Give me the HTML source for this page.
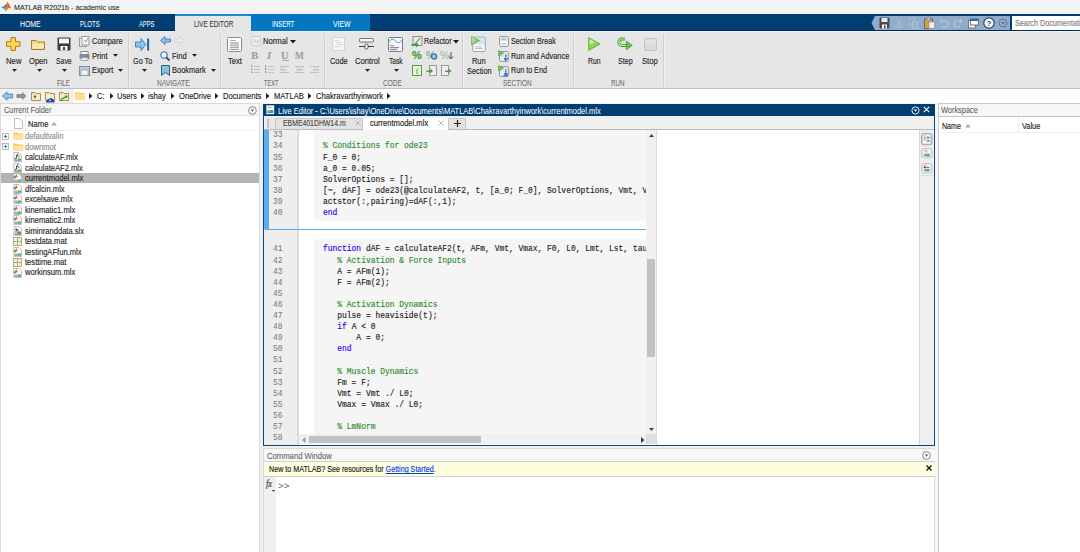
<!DOCTYPE html>
<html><head><meta charset="utf-8"><style>
html,body{margin:0;padding:0;}
body{width:1080px;height:552px;overflow:hidden;position:relative;background:#f0f0f0;font-family:"Liberation Sans",sans-serif;}
.a{position:absolute;}
.t{white-space:pre;-webkit-text-stroke:0.14px currentColor;}
.w{-webkit-text-stroke:0.04px currentColor;}
.l{-webkit-text-stroke:0.06px currentColor;}
svg{overflow:visible;}
</style></head><body>
<div class="a" style="left:0px;top:0px;width:1080px;height:14px;background:#f3f3f3;"></div>
<svg class="a" style="left:0px;top:0px;" width="14" height="14" viewBox="0 0 14 14"><path d="M1.3 7.4 L5.3 5 L6.2 8 L4.6 9.3 Z" fill="#2b9be3"/><path d="M5 5.2 L6 4.4 L7.4 1.8 L9.2 5 L11 8.7 L9 7.6 L5.8 11.2 L4.6 9.3 L6.2 8 Z" fill="#ea7a2a"/><path d="M7.4 1.8 L9.2 5 L11 8.7 L9.6 7.9 L8.2 4.2 Z" fill="#c8501c"/><path d="M5 5.2 L6 4.4 L6.4 7.8 Z" fill="#3a4f86"/><path d="M4.8 9.6 L5.8 11.2 L6.6 10.3 Z" fill="#f2b73c"/></svg>
<div class="a t l" style="left:14.070733660038519px;top:3.71px;font-size:7.2px;line-height:7.2px;color:#222;transform:scaleX(0.9937);transform-origin:0 0;">MATLAB R2021b - academic use</div>
<div class="a" style="left:0px;top:14px;width:1080px;height:17px;background:#003e73;"></div>
<div class="a" style="left:0px;top:14px;width:1080px;height:1px;background:#00346a;"></div>
<div class="a" style="left:0px;top:30px;width:1080px;height:1px;background:#002a55;"></div>
<div class="a" style="left:251px;top:14px;width:119px;height:17px;background:#0477c2;"></div>
<div class="a" style="left:175px;top:14px;width:76px;height:2px;background:#1c86d0;"></div>
<div class="a" style="left:175px;top:16px;width:76px;height:16px;background:#e6e6e6;"></div>
<div class="a t w" style="left:19.58763108015958px;top:20.20px;font-size:8.39px;line-height:8.39px;color:#ffffff;transform:scaleX(0.8192);transform-origin:0 0;">HOME</div>
<div class="a t w" style="left:79.63873876081044px;top:20.20px;font-size:8.39px;line-height:8.39px;color:#ffffff;transform:scaleX(0.7176);transform-origin:0 0;">PLOTS</div>
<div class="a t w" style="left:138.6508921644686px;top:20.20px;font-size:8.39px;line-height:8.39px;color:#ffffff;transform:scaleX(0.6935);transform-origin:0 0;">APPS</div>
<div class="a t l" style="left:193.6193337727837px;top:20.20px;font-size:8.39px;line-height:8.39px;color:#333;transform:scaleX(0.7562);transform-origin:0 0;">LIVE EDITOR</div>
<div class="a t w" style="left:271.83416208242414px;top:20.20px;font-size:8.39px;line-height:8.39px;color:#ffffff;transform:scaleX(0.7267);transform-origin:0 0;">INSERT</div>
<div class="a t w" style="left:333.28631965171763px;top:20.20px;font-size:8.39px;line-height:8.39px;color:#ffffff;transform:scaleX(0.8218);transform-origin:0 0;">VIEW</div>
<svg class="a" style="left:871px;top:16px;" width="140" height="14" viewBox="0 0 140 14"><path d="M4 0 H139 V14 H4 L0.5 7 Z" fill="#8eaccb"/></svg>
<svg class="a" style="left:879px;top:17px;" width="11" height="12" viewBox="0 0 11 12"><rect x="0.5" y="0.5" width="10" height="11" rx="1" fill="#4a4a4a"/><rect x="2.5" y="1" width="6" height="4" fill="#e8e8e8"/><rect x="3" y="7.5" width="5" height="4" fill="#f5f5f5"/><rect x="5" y="8.5" width="1.5" height="2.5" fill="#333"/></svg>
<svg class="a" style="left:895px;top:17px;" width="8" height="12" viewBox="0 0 8 12"><path d="M6.5 1 L2 8 M1.5 1 L6 8" stroke="#b0bccc" stroke-width="1" fill="none"/><circle cx="2" cy="9.5" r="1.6" stroke="#b0bccc" fill="none"/><circle cx="6" cy="9.5" r="1.6" stroke="#b0bccc" fill="none"/></svg>
<svg class="a" style="left:909px;top:18px;" width="10" height="11" viewBox="0 0 10 11"><rect x="0.5" y="0.5" width="5" height="7" fill="none" stroke="#b0bccc"/><rect x="3.5" y="3.5" width="5.5" height="7" fill="#9cb4cc" stroke="#b0bccc"/></svg>
<svg class="a" style="left:924px;top:17px;" width="11" height="12" viewBox="0 0 11 12"><rect x="0.5" y="2" width="8" height="9.5" fill="#c9a15c" stroke="#8a6a30"/><rect x="3" y="0.5" width="3" height="2.5" fill="#ddd" stroke="#777" stroke-width="0.6"/><rect x="5" y="5" width="5.5" height="6.5" fill="#f0f0f0" stroke="#888" stroke-width="0.6"/></svg>
<svg class="a" style="left:939px;top:18px;" width="10" height="10" viewBox="0 0 10 10"><path d="M2 3 H6 A3 3 0 0 1 6 9 H3" stroke="#b2c2d2" stroke-width="1.6" fill="none"/><path d="M0 3 L3 0.5 V5.5 Z" fill="#b2c2d2"/></svg>
<svg class="a" style="left:953px;top:18px;" width="10" height="10" viewBox="0 0 10 10"><path d="M8 3 H4 A3 3 0 0 0 4 9 H7" stroke="#b2c2d2" stroke-width="1.6" fill="none"/><path d="M10 3 L7 0.5 V5.5 Z" fill="#b2c2d2"/></svg>
<svg class="a" style="left:968px;top:18px;" width="11" height="11" viewBox="0 0 11 11"><rect x="0.5" y="2.5" width="7" height="7.5" fill="#f4f4f4" stroke="#666" stroke-width="0.8"/><rect x="2.5" y="1" width="8" height="6" fill="#fff" stroke="#555" stroke-width="0.8"/><rect x="2.5" y="1" width="8" height="2" fill="#2a6db0"/></svg>
<svg class="a" style="left:983px;top:17px;" width="12" height="12" viewBox="0 0 12 12"><circle cx="6" cy="6" r="5.2" fill="#fff" stroke="#1d3f6a" stroke-width="1.2"/><text x="6" y="9" font-size="8" font-weight="bold" text-anchor="middle" fill="#1d3f6a" font-family="Liberation Sans">?</text></svg>
<svg class="a" style="left:998px;top:18px;" width="10" height="10" viewBox="0 0 10 10"><circle cx="5" cy="5" r="4" fill="none" stroke="#5c6f84" stroke-width="0.9"/><path d="M3 4 L7 4 L5 6.5 Z" fill="#5c6f84"/></svg>
<div class="a" style="left:1012px;top:15.5px;width:68px;height:14.5px;background:#ffffff;"></div>
<div class="a t " style="left:1014.5656935376816px;top:19.42px;font-size:8.72px;line-height:8.72px;color:#7d7d7d;transform:scaleX(0.8301);transform-origin:0 0;">Search Documentation</div>
<div class="a" style="left:0px;top:31px;width:1080px;height:57px;background:#e6e6e6;"></div>
<div class="a" style="left:0px;top:31px;width:175px;height:1px;background:#f2f2f2;"></div>
<div class="a" style="left:251px;top:31px;width:829px;height:1px;background:#f2f2f2;"></div>
<div class="a" style="left:0px;top:88px;width:1080px;height:1px;background:#bfbfbf;"></div>
<div class="a" style="left:128px;top:34px;width:1px;height:53px;background:#cfcfcf;"></div>
<div class="a" style="left:129px;top:34px;width:1px;height:53px;background:#f0f0f0;"></div>
<div class="a" style="left:220px;top:34px;width:1px;height:53px;background:#cfcfcf;"></div>
<div class="a" style="left:221px;top:34px;width:1px;height:53px;background:#f0f0f0;"></div>
<div class="a" style="left:324px;top:34px;width:1px;height:53px;background:#cfcfcf;"></div>
<div class="a" style="left:325px;top:34px;width:1px;height:53px;background:#f0f0f0;"></div>
<div class="a" style="left:462px;top:34px;width:1px;height:53px;background:#cfcfcf;"></div>
<div class="a" style="left:463px;top:34px;width:1px;height:53px;background:#f0f0f0;"></div>
<div class="a" style="left:573px;top:34px;width:1px;height:53px;background:#cfcfcf;"></div>
<div class="a" style="left:574px;top:34px;width:1px;height:53px;background:#f0f0f0;"></div>
<div class="a" style="left:663px;top:34px;width:1px;height:53px;background:#cfcfcf;"></div>
<div class="a" style="left:664px;top:34px;width:1px;height:53px;background:#f0f0f0;"></div>
<div class="a t l" style="left:56.84091903212594px;top:79.98px;font-size:8.18px;line-height:8.18px;color:#6e6e6e;transform:scaleX(0.7316);transform-origin:0 0;">FILE</div>
<div class="a t l" style="left:157.00151378065746px;top:79.98px;font-size:8.18px;line-height:8.18px;color:#6e6e6e;transform:scaleX(0.8119);transform-origin:0 0;">NAVIGATE</div>
<div class="a t l" style="left:264.06175762338086px;top:79.98px;font-size:8.18px;line-height:8.18px;color:#6e6e6e;transform:scaleX(0.6892);transform-origin:0 0;">TEXT</div>
<div class="a t l" style="left:383.10988461989314px;top:79.98px;font-size:8.18px;line-height:8.18px;color:#6e6e6e;transform:scaleX(0.7949);transform-origin:0 0;">CODE</div>
<div class="a t l" style="left:502.61422266872376px;top:79.98px;font-size:8.18px;line-height:8.18px;color:#6e6e6e;transform:scaleX(0.7860);transform-origin:0 0;">SECTION</div>
<div class="a t l" style="left:610.6243707532901px;top:79.98px;font-size:8.18px;line-height:8.18px;color:#6e6e6e;transform:scaleX(0.7653);transform-origin:0 0;">RUN</div>
<div class="a t " style="left:5.535200209369275px;top:56.70px;font-size:8.39px;line-height:8.39px;color:#262626;transform:scaleX(0.9233);transform-origin:0 0;">New</div>
<div class="a t " style="left:29.144200049070644px;top:56.70px;font-size:8.39px;line-height:8.39px;color:#262626;transform:scaleX(0.9054);transform-origin:0 0;">Open</div>
<div class="a t " style="left:55.58617145793485px;top:56.70px;font-size:8.39px;line-height:8.39px;color:#262626;transform:scaleX(0.8221);transform-origin:0 0;">Save</div>
<svg class="a" style="left:11.5px;top:69px;" width="5" height="3" viewBox="0 0 5 3"><path d="M0 0 H5 L2.5 2.7 Z" fill="#1a1a1a"/></svg>
<svg class="a" style="left:36.5px;top:69px;" width="5" height="3" viewBox="0 0 5 3"><path d="M0 0 H5 L2.5 2.7 Z" fill="#1a1a1a"/></svg>
<svg class="a" style="left:61.5px;top:69px;" width="5" height="3" viewBox="0 0 5 3"><path d="M0 0 H5 L2.5 2.7 Z" fill="#1a1a1a"/></svg>
<svg class="a" style="left:6px;top:37px;" width="15" height="14" viewBox="0 0 15 14"><path d="M5 0.5 H9.5 V4.7 H14 V9.3 H9.5 V13.5 H5 V9.3 H0.5 V4.7 H5 Z" fill="#ffd64a" stroke="#b07a2a" stroke-width="1"/></svg>
<svg class="a" style="left:31px;top:40px;" width="14" height="10" viewBox="0 0 14 10"><path d="M0.5 0.5 H5 L6.5 2 H13.5 V9.5 H0.5 Z" fill="#f6dc8a" stroke="#a67c3d" stroke-width="1"/><path d="M1.5 4 H12.5 V8.5 H1.5Z" fill="#fbe9a8"/></svg>
<svg class="a" style="left:56.5px;top:37px;" width="14" height="14" viewBox="0 0 14 14"><rect x="0.5" y="0.5" width="13" height="13" rx="1" fill="#3a3a3a"/><rect x="2" y="1.5" width="10" height="5" fill="#f2f2f2"/><rect x="3.5" y="9" width="7" height="4.5" fill="#f5f5f5"/><rect x="6" y="10" width="2" height="3" fill="#3a3a3a"/></svg>
<div class="a t " style="left:91.55255359064091px;top:37.00px;font-size:8.39px;line-height:8.39px;color:#262626;transform:scaleX(0.8888);transform-origin:0 0;">Compare</div>
<div class="a t " style="left:91.54225771844081px;top:51.80px;font-size:8.39px;line-height:8.39px;color:#262626;transform:scaleX(0.9093);transform-origin:0 0;">Print</div>
<svg class="a" style="left:112.7px;top:54.3px;" width="5" height="3" viewBox="0 0 5 3"><path d="M0 0 H5 L2.5 2.7 Z" fill="#1a1a1a"/></svg>
<div class="a t " style="left:91.5585960604877px;top:66.40px;font-size:8.39px;line-height:8.39px;color:#262626;transform:scaleX(0.8768);transform-origin:0 0;">Export</div>
<svg class="a" style="left:118.1px;top:68.9px;" width="5" height="3" viewBox="0 0 5 3"><path d="M0 0 H5 L2.5 2.7 Z" fill="#1a1a1a"/></svg>
<svg class="a" style="left:79px;top:36px;" width="11" height="11" viewBox="0 0 11 11"><rect x="0.5" y="2" width="7" height="8.5" fill="#f0f0f0" stroke="#999"/><rect x="3" y="0.5" width="7" height="8.5" fill="#fafafa" stroke="#999"/><path d="M5 4 L7 6 L9 2" stroke="#777" fill="none" stroke-width="0.8"/></svg>
<svg class="a" style="left:79px;top:51px;" width="11" height="10" viewBox="0 0 11 10"><rect x="2" y="0.5" width="7" height="3" fill="#fff" stroke="#888"/><rect x="0.5" y="3" width="10" height="5" rx="1" fill="#7d8a99"/><rect x="2" y="6.5" width="7" height="3" fill="#dfe8f2" stroke="#888" stroke-width="0.6"/></svg>
<svg class="a" style="left:79px;top:66px;" width="11" height="10" viewBox="0 0 11 10"><rect x="0.5" y="0.5" width="10" height="9" fill="#b9cde0" stroke="#7a8ea4"/><rect x="2" y="4" width="7" height="5.5" fill="#eef3f8" stroke="#888" stroke-width="0.6"/></svg>
<div class="a t " style="left:132.96404653490728px;top:56.70px;font-size:8.39px;line-height:8.39px;color:#262626;transform:scaleX(0.8660);transform-origin:0 0;">Go To</div>
<svg class="a" style="left:141.5px;top:68.9px;" width="5" height="3" viewBox="0 0 5 3"><path d="M0 0 H5 L2.5 2.7 Z" fill="#1a1a1a"/></svg>
<svg class="a" style="left:135px;top:38px;" width="15" height="13" viewBox="0 0 15 13"><path d="M0.5 4 H6 V0.5 L11 6.5 L6 12.5 V9 H0.5 Z" fill="#8cc3ee" stroke="#3b78b6" stroke-width="0.9"/><rect x="12" y="0.5" width="2.2" height="12" fill="#2f6fb0"/></svg>
<svg class="a" style="left:160px;top:36px;" width="11" height="9" viewBox="0 0 11 9"><path d="M0.5 4.5 L5 0.5 V3 H10.5 V6 H5 V8.5 Z" fill="#8cc3ee" stroke="#3b78b6" stroke-width="0.9"/></svg>
<svg class="a" style="left:174px;top:36px;" width="11" height="9" viewBox="0 0 11 9"><path d="M10.5 4.5 L6 0.5 V3 H0.5 V6 H6 V8.5 Z" fill="#eeeeee" stroke="#cfcfcf" stroke-width="0.9"/></svg>
<div class="a t " style="left:171.54724989683427px;top:51.80px;font-size:8.39px;line-height:8.39px;color:#262626;transform:scaleX(0.8994);transform-origin:0 0;">Find</div>
<svg class="a" style="left:192.0px;top:54.3px;" width="5" height="3" viewBox="0 0 5 3"><path d="M0 0 H5 L2.5 2.7 Z" fill="#1a1a1a"/></svg>
<svg class="a" style="left:160px;top:51px;" width="10" height="10" viewBox="0 0 10 10"><circle cx="4" cy="4" r="3.2" fill="#e8f2fb" stroke="#3b6fa8" stroke-width="1.1"/><path d="M6.3 6.3 L9.5 9.5" stroke="#1f4f86" stroke-width="1.8"/></svg>
<div class="a t " style="left:171.5511730703842px;top:66.40px;font-size:8.39px;line-height:8.39px;color:#262626;transform:scaleX(0.8916);transform-origin:0 0;">Bookmark</div>
<svg class="a" style="left:211.0px;top:68.9px;" width="5" height="3" viewBox="0 0 5 3"><path d="M0 0 H5 L2.5 2.7 Z" fill="#1a1a1a"/></svg>
<svg class="a" style="left:161px;top:65px;" width="9" height="11" viewBox="0 0 9 11"><path d="M0.5 0.5 H8.5 V10.5 L4.5 7.5 L0.5 10.5 Z" fill="#7fc6d8" stroke="#2d4e6e" stroke-width="0.9"/></svg>
<svg class="a" style="left:227px;top:36.5px;" width="15" height="15" viewBox="0 0 15 15"><rect x="0.5" y="0.5" width="14" height="14" rx="1.2" fill="#fdfdfd" stroke="#8c8c8c"/><rect x="3" y="3" width="6" height="0.9" fill="#e6944a"/><rect x="3" y="5.6" width="9" height="0.75" fill="#666"/><rect x="3" y="7.7" width="9" height="0.75" fill="#666"/><rect x="3" y="9.8" width="9" height="0.75" fill="#666"/><rect x="3" y="11.9" width="9" height="0.75" fill="#666"/></svg>
<div class="a t " style="left:227.54242709313263px;top:56.70px;font-size:8.39px;line-height:8.39px;color:#262626;transform:scaleX(0.9090);transform-origin:0 0;">Text</div>
<svg class="a" style="left:250.5px;top:36px;" width="10" height="10" viewBox="0 0 10 10"><rect x="0.5" y="0.5" width="9" height="9" rx="1" fill="#eeeeee" stroke="#cfcfcf"/><text x="5" y="7" font-size="5" text-anchor="middle" fill="#c5c5c5" font-family="Liberation Sans">Aa</text></svg>
<div class="a t " style="left:262.54033078626577px;top:37.00px;font-size:8.39px;line-height:8.39px;color:#262626;transform:scaleX(0.9131);transform-origin:0 0;">Normal</div>
<svg class="a" style="left:290px;top:39.5px;" width="6" height="4" viewBox="0 0 6 4"><path d="M0 0 H6 L3 3.5 Z" fill="#1a1a1a"/></svg>
<div class="a t " style="left:250.94px;top:50.09px;font-size:11.0px;line-height:11.0px;color:#a0a0a0;font-family:'Liberation Serif',serif;font-weight:bold;">B</div>
<div class="a t " style="left:266.94px;top:50.09px;font-size:11.0px;line-height:11.0px;color:#a0a0a0;font-family:'Liberation Serif',serif;font-style:italic;font-weight:bold;">I</div>
<div class="a t " style="left:280.573px;top:50.09px;font-size:11.0px;line-height:11.0px;color:#a0a0a0;transform:scaleX(0.9500);transform-origin:0 0;font-family:'Liberation Serif',serif;font-weight:bold;">U</div>
<div class="a t " style="left:295.03900000000004px;top:50.09px;font-size:11.0px;line-height:11.0px;color:#a0a0a0;transform:scaleX(0.8500);transform-origin:0 0;font-family:'Liberation Serif',serif;font-weight:bold;">M</div>
<div class="a" style="left:282px;top:59.8px;width:7px;height:1px;background:#b0b0b0;"></div>
<svg class="a" style="left:251px;top:65px;" width="10" height="10" viewBox="0 0 10 10"><rect x="0" y="0.5" width="1.5" height="1.5" fill="#9a9a9a"/><rect x="3" y="1" width="6" height="0.9" fill="#bdbdbd"/><rect x="0" y="3.5" width="1.5" height="1.5" fill="#9a9a9a"/><rect x="3" y="4" width="6" height="0.9" fill="#bdbdbd"/><rect x="0" y="6.5" width="1.5" height="1.5" fill="#9a9a9a"/><rect x="3" y="7" width="6" height="0.9" fill="#bdbdbd"/></svg>
<svg class="a" style="left:265px;top:65px;" width="10" height="10" viewBox="0 0 10 10"><rect x="0" y="0.19999999999999996" width="1.2" height="2.2" fill="#9a9a9a"/><rect x="3" y="1" width="6" height="0.9" fill="#bdbdbd"/><rect x="0" y="3.2" width="1.2" height="2.2" fill="#9a9a9a"/><rect x="3" y="4" width="6" height="0.9" fill="#bdbdbd"/><rect x="0" y="6.2" width="1.2" height="2.2" fill="#9a9a9a"/><rect x="3" y="7" width="6" height="0.9" fill="#bdbdbd"/></svg>
<svg class="a" style="left:280px;top:65px;" width="10" height="10" viewBox="0 0 10 10"><rect x="0" y="1" width="9" height="0.9" fill="#bdbdbd"/><rect x="0" y="2.5" width="6" height="0.7" fill="#cfcfcf"/><rect x="0" y="4" width="6" height="0.9" fill="#bdbdbd"/><rect x="0" y="5.5" width="6" height="0.7" fill="#cfcfcf"/><rect x="0" y="7" width="9" height="0.9" fill="#bdbdbd"/><rect x="0" y="8.5" width="0" height="0.7" fill="#cfcfcf"/></svg>
<svg class="a" style="left:295px;top:65px;" width="10" height="10" viewBox="0 0 10 10"><rect x="0" y="1" width="9" height="0.9" fill="#bdbdbd"/><rect x="1" y="2.5" width="7" height="0.7" fill="#cfcfcf"/><rect x="1.5" y="4" width="6" height="0.9" fill="#bdbdbd"/><rect x="1" y="5.5" width="7" height="0.7" fill="#cfcfcf"/><rect x="0" y="7" width="9" height="0.9" fill="#bdbdbd"/><rect x="1" y="8.5" width="0" height="0.7" fill="#cfcfcf"/></svg>
<svg class="a" style="left:310px;top:65px;" width="10" height="10" viewBox="0 0 10 10"><rect x="0" y="1" width="9" height="0.9" fill="#bdbdbd"/><rect x="3" y="2.5" width="6" height="0.7" fill="#cfcfcf"/><rect x="3" y="4" width="6" height="0.9" fill="#bdbdbd"/><rect x="3" y="5.5" width="6" height="0.7" fill="#cfcfcf"/><rect x="0" y="7" width="9" height="0.9" fill="#bdbdbd"/><rect x="3" y="8.5" width="0" height="0.7" fill="#cfcfcf"/></svg>
<svg class="a" style="left:332px;top:37px;" width="13" height="14" viewBox="0 0 13 14"><rect x="0.5" y="0.5" width="12" height="13" fill="#f4f4f4" stroke="#d4d4d4"/><rect x="2.5" y="3" width="4" height="0.8" fill="#cfcfcf"/><rect x="4" y="5" width="5" height="0.8" fill="#cfcfcf"/><rect x="5" y="7" width="5" height="0.8" fill="#cfcfcf"/><rect x="3" y="9" width="5" height="0.8" fill="#cfcfcf"/></svg>
<div class="a t " style="left:329.5566452278917px;top:56.70px;font-size:8.39px;line-height:8.39px;color:#262626;transform:scaleX(0.8807);transform-origin:0 0;">Code</div>
<svg class="a" style="left:359px;top:38px;" width="16" height="12" viewBox="0 0 16 12"><rect x="0.5" y="0.5" width="14" height="3.5" rx="1" fill="#f5f5f5" stroke="#555" stroke-width="0.8"/><rect x="0" y="8" width="15" height="1" fill="#444"/><rect x="6" y="6" width="3" height="5" rx="1" fill="#f5f5f5" stroke="#444" stroke-width="0.8"/></svg>
<div class="a t " style="left:354.54047289009446px;top:56.70px;font-size:8.39px;line-height:8.39px;color:#262626;transform:scaleX(0.9128);transform-origin:0 0;">Control</div>
<svg class="a" style="left:364.5px;top:68.9px;" width="5" height="3" viewBox="0 0 5 3"><path d="M0 0 H5 L2.5 2.7 Z" fill="#1a1a1a"/></svg>
<svg class="a" style="left:388px;top:36.5px;" width="15" height="15" viewBox="0 0 15 15"><rect x="0.5" y="0.5" width="14" height="14" rx="1" fill="#f6f6f6" stroke="#7a7a7a"/><path d="M1 5 Q4 0 7.5 4 T14 3" stroke="#42a5e0" stroke-width="1" fill="none"/><rect x="2" y="8" width="4" height="1.2" fill="#7cc04a"/><rect x="2" y="10" width="9" height="1.2" fill="#9a7fc0"/><rect x="2" y="12" width="7" height="1.2" fill="#9a7fc0"/></svg>
<div class="a t " style="left:388.60328687000333px;top:56.70px;font-size:8.39px;line-height:8.39px;color:#262626;transform:scaleX(0.7881);transform-origin:0 0;">Task</div>
<svg class="a" style="left:393.5px;top:68.9px;" width="5" height="3" viewBox="0 0 5 3"><path d="M0 0 H5 L2.5 2.7 Z" fill="#1a1a1a"/></svg>
<svg class="a" style="left:411px;top:35.5px;" width="12" height="12" viewBox="0 0 12 12"><rect x="2" y="0.5" width="9" height="9" fill="#eaeaea" stroke="#777" stroke-width="0.8"/><path d="M4 8 L9 2" stroke="#333" stroke-width="0.8"/><path d="M0.5 8 H5 V6 L8 9 L5 11.5 V10 H0.5Z" fill="#4aa040"/></svg>
<div class="a t " style="left:423.56089379796373px;top:37.00px;font-size:8.39px;line-height:8.39px;color:#262626;transform:scaleX(0.8723);transform-origin:0 0;">Refactor</div>
<svg class="a" style="left:453px;top:39.5px;" width="6" height="4" viewBox="0 0 6 4"><path d="M0 0 H6 L3 3.5 Z" fill="#1a1a1a"/></svg>
<div class="a t " style="left:411.84735px;top:50.11px;font-size:11.45px;line-height:11.45px;color:#3c9a2c;transform:scaleX(0.9500);transform-origin:0 0;font-weight:bold;">%</div>
<div class="a t " style="left:425.84735px;top:50.11px;font-size:11.45px;line-height:11.45px;color:#79b06a;transform:scaleX(0.9500);transform-origin:0 0;">%</div>
<svg class="a" style="left:430px;top:53px;" width="8" height="7" viewBox="0 0 8 7"><circle cx="4" cy="3.5" r="2.6" fill="none" stroke="#3a6fc0" stroke-width="1.4"/><circle cx="4" cy="3.5" r="1" fill="#9cc0ea"/></svg>
<div class="a t " style="left:440.34735px;top:50.11px;font-size:11.45px;line-height:11.45px;color:#9ac58e;transform:scaleX(0.9500);transform-origin:0 0;">%</div>
<svg class="a" style="left:449px;top:51.5px;" width="5" height="8" viewBox="0 0 5 8"><path d="M2 0 V6 M0 4.5 L2 7 L4 4.5" stroke="#444" fill="none" stroke-width="0.9"/></svg>
<svg class="a" style="left:412px;top:65px;" width="10" height="11" viewBox="0 0 10 11"><rect x="0.5" y="0.5" width="9" height="10" fill="#e8f4dc" stroke="#5aa040"/><text x="5" y="8.5" font-size="8" text-anchor="middle" fill="#4a8a30" font-family="Liberation Serif">f</text></svg>
<svg class="a" style="left:426px;top:65px;" width="11" height="11" viewBox="0 0 11 11"><rect x="3.5" y="0.5" width="7" height="10" fill="#eeeeee" stroke="#888" stroke-width="0.8"/><path d="M0.5 5.5 H4 V3.5 L7 6 L4 8.5 V7 H0.5Z" fill="#4aa040"/></svg>
<svg class="a" style="left:441px;top:65px;" width="11" height="11" viewBox="0 0 11 11"><rect x="0.5" y="0.5" width="7" height="10" fill="#eeeeee" stroke="#888" stroke-width="0.8"/><path d="M4 5.5 H7.5 V3.5 L10.5 6 L7.5 8.5 V7 H4Z" fill="#4aa040"/></svg>
<svg class="a" style="left:470.5px;top:36px;" width="15" height="16" viewBox="0 0 15 16"><defs><linearGradient id="gtri" x1="0" y1="0" x2="1" y2="1"><stop offset="0" stop-color="#e8f7b0"/><stop offset="1" stop-color="#4fb030"/></linearGradient></defs><rect x="1.8" y="1.2" width="12.4" height="14.4" rx="1.2" fill="#fafafa" stroke="#8c8c8c" stroke-width="0.8"/><rect x="2.3" y="1.7" width="11.4" height="6.8" fill="#cde6f8"/><rect x="4" y="10.5" width="7" height="0.8" fill="#aaa"/><rect x="4" y="12.3" width="8" height="0.8" fill="#aaa"/><path d="M0.6 0.6 L8.5 4.6 L0.6 8.8 Z" fill="url(#gtri)" stroke="#3a9428" stroke-width="0.6"/></svg>
<div class="a t " style="left:472.0528764767526px;top:57.20px;font-size:8.39px;line-height:8.39px;color:#262626;transform:scaleX(0.8882);transform-origin:0 0;">Run</div>
<div class="a t " style="left:466.55630446295316px;top:66.90px;font-size:8.39px;line-height:8.39px;color:#262626;transform:scaleX(0.8814);transform-origin:0 0;">Section</div>
<svg class="a" style="left:498.5px;top:35.5px;" width="10" height="11" viewBox="0 0 10 11"><rect x="0.6" y="0.6" width="8.8" height="9.8" rx="1" fill="#fafafa" stroke="#7a7a7a" stroke-width="0.8"/><rect x="1.1" y="1.1" width="7.8" height="4" fill="#d3e8f7"/><rect x="2.5" y="2.6" width="4.5" height="1" fill="#9aa6b0"/><rect x="2.5" y="7.4" width="4.5" height="1" fill="#b0b0b0"/></svg>
<div class="a t " style="left:510.86679229907304px;top:37.00px;font-size:8.39px;line-height:8.39px;color:#262626;transform:scaleX(0.8606);transform-origin:0 0;">Section Break</div>
<svg class="a" style="left:498px;top:49.5px;" width="11" height="12" viewBox="0 0 11 12"><rect x="1.6" y="1.6" width="8.8" height="9.8" rx="1" fill="#eef4fa" stroke="#7a7a7a" stroke-width="0.8"/><rect x="2.1" y="2.1" width="7.8" height="4.5" fill="#cfe4f6"/><path d="M0.5 0.5 L5.5 3.2 L0.5 6 Z" fill="#7cc84c" stroke="#3a9428" stroke-width="0.5"/><path d="M7.8 4.5 V10 M6 8.2 L7.8 10.5 L9.6 8.2" stroke="#2d6fc0" stroke-width="1.1" fill="none"/></svg>
<div class="a t " style="left:510.8564417325294px;top:51.80px;font-size:8.39px;line-height:8.39px;color:#262626;transform:scaleX(0.8811);transform-origin:0 0;">Run and Advance</div>
<svg class="a" style="left:498px;top:64.5px;" width="11" height="12" viewBox="0 0 11 12"><rect x="1.6" y="1.6" width="8.8" height="9.8" rx="1" fill="#eef4fa" stroke="#7a7a7a" stroke-width="0.8"/><rect x="2.1" y="2.1" width="7.8" height="4.5" fill="#cfe4f6"/><path d="M0.5 0.5 L5.5 3.2 L0.5 6 Z" fill="#7cc84c" stroke="#3a9428" stroke-width="0.5"/><path d="M7.8 4.5 V10 M6 8.2 L7.8 10.5 L9.6 8.2" stroke="#2d6fc0" stroke-width="1.1" fill="none"/><rect x="5.5" y="10.3" width="4.6" height="1" fill="#2d6fc0"/></svg>
<div class="a t " style="left:510.8689372257203px;top:66.40px;font-size:8.39px;line-height:8.39px;color:#262626;transform:scaleX(0.8563);transform-origin:0 0;">Run to End</div>
<svg class="a" style="left:587.5px;top:37px;" width="13" height="14" viewBox="0 0 13 14"><path d="M0.7 0.7 L12 7 L0.7 13.3 Z" fill="#8fd45a" stroke="#5aa82a" stroke-width="0.9"/><path d="M1.5 2 L7 5 L1.5 8Z" fill="#c9ec9e"/></svg>
<div class="a t " style="left:587.5872705939255px;top:56.70px;font-size:8.39px;line-height:8.39px;color:#262626;transform:scaleX(0.8199);transform-origin:0 0;">Run</div>
<svg class="a" style="left:617px;top:37px;" width="17" height="14" viewBox="0 0 17 14"><path d="M8 2 H5 A3.2 3.2 0 0 0 5 8.4 H10.5" stroke="#3f9a2c" stroke-width="3" fill="none"/><path d="M8 2 H5 A3.2 3.2 0 0 0 5 8.4 H10.5" stroke="#c9ef9a" stroke-width="1.2" fill="none"/><path d="M9.3 4.2 L15.3 8.4 L9.3 12.8 Z" fill="#6cc048" stroke="#3f8e2a" stroke-width="0.7"/></svg>
<div class="a t " style="left:617.572984264915px;top:56.70px;font-size:8.39px;line-height:8.39px;color:#262626;transform:scaleX(0.8483);transform-origin:0 0;">Step</div>
<svg class="a" style="left:643.5px;top:38px;" width="13" height="13" viewBox="0 0 13 13"><rect x="0.5" y="0.5" width="12" height="12" rx="1.5" fill="#d9d9d9" stroke="#c4c4c4"/><rect x="1.5" y="1.5" width="10" height="5" rx="1" fill="#e2e2e2"/></svg>
<div class="a t " style="left:641.5424831409804px;top:56.70px;font-size:8.39px;line-height:8.39px;color:#262626;transform:scaleX(0.9089);transform-origin:0 0;">Stop</div>
<div class="a" style="left:0px;top:89px;width:1080px;height:14px;background:#f0f0f0;"></div>
<div class="a" style="left:74px;top:89px;width:1006px;height:14px;background:#ffffff;"></div>
<svg class="a" style="left:2px;top:91px;" width="11" height="10" viewBox="0 0 11 10"><path d="M0.5 5 L5 0.8 V3 H10.5 V7 H5 V9.2 Z" fill="#8fc4ee" stroke="#3b78b6" stroke-width="0.8"/></svg>
<svg class="a" style="left:16px;top:91px;" width="11" height="10" viewBox="0 0 11 10"><path d="M10.5 5 L6 0.8 V3 H0.5 V7 H6 V9.2 Z" fill="#8f8f8f"/></svg>
<svg class="a" style="left:30.5px;top:91px;" width="10" height="10" viewBox="0 0 10 10"><path d="M0.5 1.5 H4 L5 2.5 H9.5 V9.5 H0.5 Z" fill="#f6e3a6" stroke="#a8844c" stroke-width="0.9"/><path d="M1.3 4 H8.7 V8.7 H1.3Z" fill="#fbf0c4"/><path d="M4 7.5 L4 5 M2.8 6 L4 4.6 L5.2 6" stroke="#333" stroke-width="0.9" fill="none"/></svg>
<svg class="a" style="left:44.5px;top:90.5px;" width="11" height="12" viewBox="0 0 11 12"><path d="M0.5 1.5 H4 L5 2.5 H9.5 V9.5 H0.5 Z" fill="#f6e3a6" stroke="#a8844c" stroke-width="0.9"/><path d="M1.3 4 H8.7 V8.7 H1.3Z" fill="#fbf0c4"/><path d="M1 11.5 Q1 8 4 8 Q5 6.5 7 7.5 Q9.5 8 9.5 11.5 Z" fill="#1c4f98"/><path d="M5 10.5 V9 M4.3 9.6 L5 8.8 L5.7 9.6" stroke="#fff" stroke-width="0.7" fill="none"/></svg>
<svg class="a" style="left:58.5px;top:90.5px;" width="11" height="11" viewBox="0 0 11 11"><path d="M0.5 1.5 H4 L5 2.5 H9.5 V9.5 H0.5 Z" fill="#f6e3a6" stroke="#a8844c" stroke-width="0.9"/><path d="M1.3 4 H8.7 V8.7 H1.3Z" fill="#fbf0c4"/><path d="M1.5 10 L3.5 7.5 L7.5 5.5" stroke="#3f9a3a" stroke-width="1.4" fill="none"/><path d="M6.5 4 L9 5.2 L7 7.5Z" fill="#3f9a3a"/></svg>
<svg class="a" style="left:75px;top:91px;" width="10" height="9" viewBox="0 0 10 9"><path d="M0 1 H4 L5 2 H10 V9 H0Z" fill="#f9d66a"/><rect x="0" y="3" width="10" height="6" fill="#fbe08c"/></svg>
<div class="a t " style="left:97.34437199999999px;top:92.13px;font-size:8.83px;line-height:8.83px;color:#222;transform:scaleX(0.8600);transform-origin:0 0;">C:</div>
<div class="a t " style="left:117.34437199999999px;top:92.13px;font-size:8.83px;line-height:8.83px;color:#222;transform:scaleX(0.8600);transform-origin:0 0;">Users</div>
<div class="a t " style="left:148.44437200000002px;top:92.13px;font-size:8.83px;line-height:8.83px;color:#222;transform:scaleX(0.8600);transform-origin:0 0;">ishay</div>
<div class="a t " style="left:178.544372px;top:92.13px;font-size:8.83px;line-height:8.83px;color:#222;transform:scaleX(0.8600);transform-origin:0 0;">OneDrive</div>
<div class="a t " style="left:222.544372px;top:92.13px;font-size:8.83px;line-height:8.83px;color:#222;transform:scaleX(0.8600);transform-origin:0 0;">Documents</div>
<div class="a t " style="left:273.544372px;top:92.13px;font-size:8.83px;line-height:8.83px;color:#222;transform:scaleX(0.8600);transform-origin:0 0;">MATLAB</div>
<div class="a t " style="left:315.544372px;top:92.13px;font-size:8.83px;line-height:8.83px;color:#222;transform:scaleX(0.8600);transform-origin:0 0;">Chakravarthyinwork</div>
<svg class="a" style="left:89.4px;top:93px;" width="4" height="6" viewBox="0 0 4 6"><path d="M0 0 L3.5 3 L0 6 Z" fill="#222"/></svg>
<svg class="a" style="left:110px;top:93px;" width="4" height="6" viewBox="0 0 4 6"><path d="M0 0 L3.5 3 L0 6 Z" fill="#222"/></svg>
<svg class="a" style="left:141px;top:93px;" width="4" height="6" viewBox="0 0 4 6"><path d="M0 0 L3.5 3 L0 6 Z" fill="#222"/></svg>
<svg class="a" style="left:171px;top:93px;" width="4" height="6" viewBox="0 0 4 6"><path d="M0 0 L3.5 3 L0 6 Z" fill="#222"/></svg>
<svg class="a" style="left:214.6px;top:93px;" width="4" height="6" viewBox="0 0 4 6"><path d="M0 0 L3.5 3 L0 6 Z" fill="#222"/></svg>
<svg class="a" style="left:266px;top:93px;" width="4" height="6" viewBox="0 0 4 6"><path d="M0 0 L3.5 3 L0 6 Z" fill="#222"/></svg>
<svg class="a" style="left:308px;top:93px;" width="4" height="6" viewBox="0 0 4 6"><path d="M0 0 L3.5 3 L0 6 Z" fill="#222"/></svg>
<svg class="a" style="left:386.5px;top:93px;" width="4" height="6" viewBox="0 0 4 6"><path d="M0 0 L3.5 3 L0 6 Z" fill="#222"/></svg>
<div class="a" style="left:0px;top:103px;width:1080px;height:449px;background:#f0f0f0;"></div>
<div class="a" style="left:1px;top:104px;width:258px;height:448px;background:#ffffff;box-shadow:0 0 0 1px #dadada;"></div>
<div class="a" style="left:1px;top:104px;width:258px;height:11px;background:#f7f7f7;"></div>
<div class="a" style="left:1px;top:115px;width:258px;height:1px;background:#e3e3e3;"></div>
<div class="a t l" style="left:3.9592141324412484px;top:106.12px;font-size:8.72px;line-height:8.72px;color:#5a5a5a;transform:scaleX(0.8425);transform-origin:0 0;">Current Folder</div>
<svg class="a" style="left:247.5px;top:105.5px;" width="9" height="9" viewBox="0 0 9 9"><circle cx="4.5" cy="4.5" r="3.8" fill="#fff" stroke="#666" stroke-width="0.8"/><path d="M2.8 3.6 H6.2 L4.5 5.8Z" fill="#555"/></svg>
<div class="a" style="left:1px;top:130px;width:258px;height:1px;background:#f0f0f0;"></div>
<div class="a" style="left:25px;top:116px;width:1px;height:14px;background:#ececec;"></div>
<svg class="a" style="left:14px;top:118px;" width="9" height="11" viewBox="0 0 9 11"><path d="M0.5 0.5 H5.5 L8.5 3.5 V10.5 H0.5Z" fill="#fff" stroke="#aaa" stroke-width="0.8"/></svg>
<div class="a t " style="left:27.84141610087294px;top:119.72px;font-size:8.72px;line-height:8.72px;color:#222;transform:scaleX(0.8765);transform-origin:0 0;">Name</div>
<svg class="a" style="left:51px;top:121.5px;" width="6" height="4" viewBox="0 0 6 4"><path d="M0 3.5 L3 0 L6 3.5Z" fill="#a9a9a9"/></svg>
<div class="a t " style="left:25.044372px;top:132.23px;font-size:8.83px;line-height:8.83px;color:#8c8c8c;transform:scaleX(0.8600);transform-origin:0 0;">defaultvalin</div>
<svg class="a" style="left:2px;top:132.8px;" width="7" height="7" viewBox="0 0 7 7"><rect x="0.5" y="0.5" width="6" height="6" fill="#f4f6fa" stroke="#a0a0a0" stroke-width="0.7"/><path d="M2 3.5 H5 M3.5 2 V5" stroke="#3a5f8a" stroke-width="0.8"/></svg>
<svg class="a" style="left:12.5px;top:132.10000000000002px;" width="11" height="8" viewBox="0 0 11 8"><path d="M0.3 0.5 H4 L5 1.6 H10.2 V7.6 H0.3Z" fill="#f3c95a"/><rect x="0.3" y="2.6" width="9.9" height="5" fill="#fbe39a"/></svg>
<div class="a t " style="left:25.044372px;top:142.71px;font-size:8.83px;line-height:8.83px;color:#8c8c8c;transform:scaleX(0.8600);transform-origin:0 0;">downmot</div>
<svg class="a" style="left:2px;top:143.28px;" width="7" height="7" viewBox="0 0 7 7"><rect x="0.5" y="0.5" width="6" height="6" fill="#f4f6fa" stroke="#a0a0a0" stroke-width="0.7"/><path d="M2 3.5 H5 M3.5 2 V5" stroke="#3a5f8a" stroke-width="0.8"/></svg>
<svg class="a" style="left:12.5px;top:142.58px;" width="11" height="8" viewBox="0 0 11 8"><path d="M0.3 0.5 H4 L5 1.6 H10.2 V7.6 H0.3Z" fill="#f3c95a"/><rect x="0.3" y="2.6" width="9.9" height="5" fill="#fbe39a"/></svg>
<div class="a t " style="left:25.044372px;top:153.19px;font-size:8.83px;line-height:8.83px;color:#1e1e1e;transform:scaleX(0.8600);transform-origin:0 0;">calculateAF.mlx</div>
<svg class="a" style="left:13.3px;top:152.36px;" width="9" height="10" viewBox="0 0 9 10"><path d="M0.9 0.5 H6 L8.5 3 V9.5 H0.9Z" fill="#fdfdfd" stroke="#a4a4a4" stroke-width="0.7"/><rect x="1.6" y="6.6" width="6.2" height="2.2" fill="#3f9fe0"/><path d="M1.6 7.6 Q3.5 6 5.5 7.2 L5.5 8 L1.6 8Z" fill="#f2c12e"/><rect x="5.5" y="6.8" width="2.3" height="1.2" fill="#4cb050"/><path d="M5.5 1.8 Q4 1.5 3.8 3.5 L3.2 6 Q3 7 2 6.8" stroke="#333" stroke-width="0.9" fill="none"/><path d="M3 3.6 H5.2" stroke="#333" stroke-width="0.7"/><path d="M4.8 3.4 L6.8 5.4 M6.8 3.4 L4.8 5.4" stroke="#555" stroke-width="0.6"/></svg>
<div class="a t " style="left:25.044372px;top:163.67px;font-size:8.83px;line-height:8.83px;color:#1e1e1e;transform:scaleX(0.8600);transform-origin:0 0;">calculateAF2.mlx</div>
<svg class="a" style="left:13.3px;top:162.84px;" width="9" height="10" viewBox="0 0 9 10"><path d="M0.9 0.5 H6 L8.5 3 V9.5 H0.9Z" fill="#fdfdfd" stroke="#a4a4a4" stroke-width="0.7"/><rect x="1.6" y="6.6" width="6.2" height="2.2" fill="#3f9fe0"/><path d="M1.6 7.6 Q3.5 6 5.5 7.2 L5.5 8 L1.6 8Z" fill="#f2c12e"/><rect x="5.5" y="6.8" width="2.3" height="1.2" fill="#4cb050"/><path d="M5.5 1.8 Q4 1.5 3.8 3.5 L3.2 6 Q3 7 2 6.8" stroke="#333" stroke-width="0.9" fill="none"/><path d="M3 3.6 H5.2" stroke="#333" stroke-width="0.7"/><path d="M4.8 3.4 L6.8 5.4 M6.8 3.4 L4.8 5.4" stroke="#555" stroke-width="0.6"/></svg>
<div class="a" style="left:1px;top:173.3px;width:258px;height:9.7px;background:#b4b4b4;"></div>
<div class="a t " style="left:25.044372px;top:174.15px;font-size:8.83px;line-height:8.83px;color:#1e1e1e;transform:scaleX(0.8600);transform-origin:0 0;">currentmodel.mlx</div>
<svg class="a" style="left:13.3px;top:173.32000000000002px;" width="9" height="10" viewBox="0 0 9 10"><path d="M0.9 0.5 H6 L8.5 3 V9.5 H0.9Z" fill="#fdfdfd" stroke="#a4a4a4" stroke-width="0.7"/><rect x="1.6" y="6.6" width="6.2" height="2.2" fill="#3f9fe0"/><path d="M1.6 7.6 Q3.5 6 5.5 7.2 L5.5 8 L1.6 8Z" fill="#f2c12e"/><rect x="5.5" y="6.8" width="2.3" height="1.2" fill="#4cb050"/><path d="M0 4.3 L2.2 3 L3.4 1 L5 4.5 L3.8 4 L2.6 5.6 Z" fill="#e8682a"/><path d="M0 4.3 L2.2 3 L2.4 4.6 Z" fill="#2b8fe0"/></svg>
<div class="a t " style="left:25.044372px;top:184.63px;font-size:8.83px;line-height:8.83px;color:#1e1e1e;transform:scaleX(0.8600);transform-origin:0 0;">dfcalcin.mlx</div>
<svg class="a" style="left:13.3px;top:183.8px;" width="9" height="10" viewBox="0 0 9 10"><path d="M0.9 0.5 H6 L8.5 3 V9.5 H0.9Z" fill="#fdfdfd" stroke="#a4a4a4" stroke-width="0.7"/><rect x="1.6" y="6.6" width="6.2" height="2.2" fill="#3f9fe0"/><path d="M1.6 7.6 Q3.5 6 5.5 7.2 L5.5 8 L1.6 8Z" fill="#f2c12e"/><rect x="5.5" y="6.8" width="2.3" height="1.2" fill="#4cb050"/><path d="M0 4.3 L2.2 3 L3.4 1 L5 4.5 L3.8 4 L2.6 5.6 Z" fill="#e8682a"/><path d="M0 4.3 L2.2 3 L2.4 4.6 Z" fill="#2b8fe0"/></svg>
<div class="a t " style="left:25.044372px;top:195.11px;font-size:8.83px;line-height:8.83px;color:#1e1e1e;transform:scaleX(0.8600);transform-origin:0 0;">excelsave.mlx</div>
<svg class="a" style="left:13.3px;top:194.28px;" width="9" height="10" viewBox="0 0 9 10"><path d="M0.9 0.5 H6 L8.5 3 V9.5 H0.9Z" fill="#fdfdfd" stroke="#a4a4a4" stroke-width="0.7"/><rect x="1.6" y="6.6" width="6.2" height="2.2" fill="#3f9fe0"/><path d="M1.6 7.6 Q3.5 6 5.5 7.2 L5.5 8 L1.6 8Z" fill="#f2c12e"/><rect x="5.5" y="6.8" width="2.3" height="1.2" fill="#4cb050"/><path d="M0 4.3 L2.2 3 L3.4 1 L5 4.5 L3.8 4 L2.6 5.6 Z" fill="#e8682a"/><path d="M0 4.3 L2.2 3 L2.4 4.6 Z" fill="#2b8fe0"/></svg>
<div class="a t " style="left:25.044372px;top:205.59px;font-size:8.83px;line-height:8.83px;color:#1e1e1e;transform:scaleX(0.8600);transform-origin:0 0;">kinematic1.mlx</div>
<svg class="a" style="left:13.3px;top:204.76000000000002px;" width="9" height="10" viewBox="0 0 9 10"><path d="M0.9 0.5 H6 L8.5 3 V9.5 H0.9Z" fill="#fdfdfd" stroke="#a4a4a4" stroke-width="0.7"/><rect x="1.6" y="6.6" width="6.2" height="2.2" fill="#3f9fe0"/><path d="M1.6 7.6 Q3.5 6 5.5 7.2 L5.5 8 L1.6 8Z" fill="#f2c12e"/><rect x="5.5" y="6.8" width="2.3" height="1.2" fill="#4cb050"/><path d="M0 4.3 L2.2 3 L3.4 1 L5 4.5 L3.8 4 L2.6 5.6 Z" fill="#e8682a"/><path d="M0 4.3 L2.2 3 L2.4 4.6 Z" fill="#2b8fe0"/></svg>
<div class="a t " style="left:25.044372px;top:216.07px;font-size:8.83px;line-height:8.83px;color:#1e1e1e;transform:scaleX(0.8600);transform-origin:0 0;">kinematic2.mlx</div>
<svg class="a" style="left:13.3px;top:215.24px;" width="9" height="10" viewBox="0 0 9 10"><path d="M0.9 0.5 H6 L8.5 3 V9.5 H0.9Z" fill="#fdfdfd" stroke="#a4a4a4" stroke-width="0.7"/><rect x="1.6" y="6.6" width="6.2" height="2.2" fill="#3f9fe0"/><path d="M1.6 7.6 Q3.5 6 5.5 7.2 L5.5 8 L1.6 8Z" fill="#f2c12e"/><rect x="5.5" y="6.8" width="2.3" height="1.2" fill="#4cb050"/><path d="M0 4.3 L2.2 3 L3.4 1 L5 4.5 L3.8 4 L2.6 5.6 Z" fill="#e8682a"/><path d="M0 4.3 L2.2 3 L2.4 4.6 Z" fill="#2b8fe0"/></svg>
<div class="a t " style="left:25.044372px;top:226.55px;font-size:8.83px;line-height:8.83px;color:#1e1e1e;transform:scaleX(0.8600);transform-origin:0 0;">siminranddata.slx</div>
<svg class="a" style="left:13.3px;top:225.72px;" width="9" height="10" viewBox="0 0 9 10"><path d="M0.9 0.5 H6 L8.5 3 V9.5 H0.9Z" fill="#fdfdfd" stroke="#a4a4a4" stroke-width="0.7"/><rect x="1.6" y="6.6" width="6.2" height="2.2" fill="#3f9fe0"/><path d="M1.6 7.6 Q3.5 6 5.5 7.2 L5.5 8 L1.6 8Z" fill="#f2c12e"/><rect x="5.5" y="6.8" width="2.3" height="1.2" fill="#4cb050"/><path d="M2.5 1.8 L6 4 L2.5 6.2 Z" fill="#2d6fc0"/><circle cx="6" cy="6.5" r="1.6" fill="#e0502a"/></svg>
<div class="a t " style="left:25.044372px;top:237.03px;font-size:8.83px;line-height:8.83px;color:#1e1e1e;transform:scaleX(0.8600);transform-origin:0 0;">testdata.mat</div>
<svg class="a" style="left:13.3px;top:236.60000000000002px;" width="9" height="9" viewBox="0 0 9 9"><rect x="0.5" y="0.5" width="8" height="8" fill="#fff3a8" stroke="#8a9bb0" stroke-width="0.8"/><path d="M4.5 0.5 V8.5 M0.5 4.5 H8.5" stroke="#8a9bb0" stroke-width="0.8"/></svg>
<div class="a t " style="left:25.044372px;top:247.51px;font-size:8.83px;line-height:8.83px;color:#1e1e1e;transform:scaleX(0.8600);transform-origin:0 0;">testingAFfun.mlx</div>
<svg class="a" style="left:13.3px;top:246.68px;" width="9" height="10" viewBox="0 0 9 10"><path d="M0.9 0.5 H6 L8.5 3 V9.5 H0.9Z" fill="#fdfdfd" stroke="#a4a4a4" stroke-width="0.7"/><rect x="1.6" y="6.6" width="6.2" height="2.2" fill="#3f9fe0"/><path d="M1.6 7.6 Q3.5 6 5.5 7.2 L5.5 8 L1.6 8Z" fill="#f2c12e"/><rect x="5.5" y="6.8" width="2.3" height="1.2" fill="#4cb050"/><path d="M0 4.3 L2.2 3 L3.4 1 L5 4.5 L3.8 4 L2.6 5.6 Z" fill="#e8682a"/><path d="M0 4.3 L2.2 3 L2.4 4.6 Z" fill="#2b8fe0"/></svg>
<div class="a t " style="left:25.044372px;top:257.99px;font-size:8.83px;line-height:8.83px;color:#1e1e1e;transform:scaleX(0.8600);transform-origin:0 0;">testtime.mat</div>
<svg class="a" style="left:13.3px;top:257.56px;" width="9" height="9" viewBox="0 0 9 9"><rect x="0.5" y="0.5" width="8" height="8" fill="#fff3a8" stroke="#8a9bb0" stroke-width="0.8"/><path d="M4.5 0.5 V8.5 M0.5 4.5 H8.5" stroke="#8a9bb0" stroke-width="0.8"/></svg>
<div class="a t " style="left:25.044372px;top:268.47px;font-size:8.83px;line-height:8.83px;color:#1e1e1e;transform:scaleX(0.8600);transform-origin:0 0;">workinsum.mlx</div>
<svg class="a" style="left:13.3px;top:267.64000000000004px;" width="9" height="10" viewBox="0 0 9 10"><path d="M0.9 0.5 H6 L8.5 3 V9.5 H0.9Z" fill="#fdfdfd" stroke="#a4a4a4" stroke-width="0.7"/><rect x="1.6" y="6.6" width="6.2" height="2.2" fill="#3f9fe0"/><path d="M1.6 7.6 Q3.5 6 5.5 7.2 L5.5 8 L1.6 8Z" fill="#f2c12e"/><rect x="5.5" y="6.8" width="2.3" height="1.2" fill="#4cb050"/><path d="M0 4.3 L2.2 3 L3.4 1 L5 4.5 L3.8 4 L2.6 5.6 Z" fill="#e8682a"/><path d="M0 4.3 L2.2 3 L2.4 4.6 Z" fill="#2b8fe0"/></svg>
<div class="a" style="left:263px;top:103.5px;width:672px;height:342.5px;background:#0b4784;"></div>
<div class="a" style="left:263px;top:103.5px;width:672px;height:12.5px;background:#003e73;"></div>
<div class="a" style="left:264.2px;top:116px;width:669.5px;height:328.6px;background:#ffffff;"></div>
<svg class="a" style="left:266px;top:105px;" width="8" height="9" viewBox="0 0 8 9"><rect x="0.5" y="0.5" width="7.5" height="8.5" fill="#fff" stroke="#ccc" stroke-width="0.5"/><rect x="1.2" y="5" width="6" height="3" fill="#2f9be0"/><rect x="1.2" y="5" width="3" height="1.5" fill="#f2c12e"/><rect x="1.5" y="2" width="4" height="0.8" fill="#888"/></svg>
<div class="a t w" style="left:278.252026131809px;top:106.52px;font-size:8.72px;line-height:8.72px;color:#ffffff;transform:scaleX(0.8562);transform-origin:0 0;">Live Editor - C:\Users\ishay\OneDrive\Documents\MATLAB\Chakravarthyinwork\currentmodel.mlx</div>
<svg class="a" style="left:910.5px;top:105.5px;" width="9" height="9" viewBox="0 0 9 9"><circle cx="4.5" cy="4.5" r="3.6" fill="none" stroke="#fff" stroke-width="0.9"/><path d="M2.8 3.6 H6.2 L4.5 5.8Z" fill="#fff"/></svg>
<svg class="a" style="left:922.5px;top:106px;" width="7" height="7" viewBox="0 0 7 7"><path d="M0.8 0.8 L6.2 6.2 M6.2 0.8 L0.8 6.2" stroke="#fff" stroke-width="1.1"/></svg>
<div class="a" style="left:264.2px;top:116px;width:669.5px;height:13px;background:#f0f0f0;"></div>
<div class="a" style="left:264.2px;top:128.5px;width:669.5px;height:1px;background:#b9b9b9;"></div>
<div class="a" style="left:266px;top:118px;width:9px;height:11px;background:#e8e8e8;border-right:1px solid #c9c9c9;"></div>
<div class="a" style="left:267px;top:119px;width:1.5px;height:9px;background:#c4c4c4;"></div>
<div class="a" style="left:275px;top:117.5px;width:88px;height:11.5px;background:#e3e3e3;border:1px solid #c6c6c6;border-bottom:none;border-radius:2px 2px 0 0;box-sizing:border-box;"></div>
<div class="a t " style="left:282.5877581057097px;top:118.92px;font-size:8.72px;line-height:8.72px;color:#4a4a4a;transform:scaleX(0.7879);transform-origin:0 0;">EBME401DHW14.m</div>
<svg class="a" style="left:354.5px;top:119.5px;" width="6" height="6" viewBox="0 0 6 6"><path d="M0.5 0.5 L5.5 5.5 M5.5 0.5 L0.5 5.5" stroke="#b4b4b4" stroke-width="1"/></svg>
<div class="a" style="left:363px;top:117.5px;width:84.5px;height:12px;background:#ffffff;border-radius:2px 2px 0 0;"></div>
<div class="a t " style="left:370.0447948278137px;top:118.92px;font-size:8.72px;line-height:8.72px;color:#1a1a1a;transform:scaleX(0.8700);transform-origin:0 0;">currentmodel.mlx</div>
<svg class="a" style="left:437.5px;top:119.5px;" width="6" height="6" viewBox="0 0 6 6"><path d="M0.5 0.5 L5.5 5.5 M5.5 0.5 L0.5 5.5" stroke="#b4b4b4" stroke-width="1"/></svg>
<div class="a" style="left:448px;top:117.5px;width:18px;height:11.5px;background:#e3e3e3;border:1px solid #c6c6c6;border-bottom:none;border-radius:2px 2px 0 0;box-sizing:border-box;"></div>
<svg class="a" style="left:453.5px;top:119.5px;" width="7" height="7" viewBox="0 0 7 7"><path d="M3.5 0 V7 M0 3.5 H7" stroke="#222" stroke-width="1.2"/></svg>
<div class="a" style="left:264.2px;top:129.5px;width:33.3px;height:315px;background:#eeeeee;"></div>
<div class="a" style="left:264.2px;top:129.5px;width:4.6px;height:99.5px;background:#5caef0;"></div>
<div class="a" style="left:297px;top:129.5px;width:2px;height:315px;background:#dcdcdc;"></div>
<div class="a" style="left:314.3px;top:129.5px;width:332px;height:91.3px;background:#f5f5f5;border-radius:0 0 3px 3px;"></div>
<div class="a" style="left:264.5px;top:229px;width:381.7px;height:1px;background:#52acf0;"></div>
<div class="a" style="left:314.3px;top:238.6px;width:332px;height:205.9px;background:#f5f5f5;border-radius:3px 3px 0 0;"></div>
<div class="a" style="left:656px;top:129.5px;width:264px;height:315px;background:#ffffff;"></div>
<div class="a" style="left:656px;top:129.5px;width:1px;height:315px;background:#d9d9d9;"></div>
<div class="a" style="left:299px;top:434.4px;width:347.2px;height:9.6px;background:#f0f0f0;"></div>
<div class="a" style="left:309.3px;top:435.8px;width:172px;height:6.8px;background:#c2c2c2;"></div>
<svg class="a" style="left:302px;top:436.5px;" width="4" height="6" viewBox="0 0 4 6"><path d="M3.5 0 L0 3 L3.5 6Z" fill="#9a9a9a"/></svg>
<svg class="a" style="left:641px;top:436.5px;" width="4" height="6" viewBox="0 0 4 6"><path d="M0 0 L3.5 3 L0 6Z" fill="#404040"/></svg>
<div class="a" style="left:646.2px;top:434.4px;width:9.8px;height:9.6px;background:#dedede;"></div>
<div class="a" style="left:919px;top:129.5px;width:14.7px;height:315px;background:#efefef;"></div>
<div class="a" style="left:919px;top:129.5px;width:1px;height:315px;background:#d6d6d6;"></div>
<svg class="a" style="left:920.8px;top:132.5px;" width="11.5" height="12.3" viewBox="0 0 11.5 12.3"><rect x="0.5" y="0.5" width="10.5" height="11.3" rx="2" fill="#d4d4d4" stroke="#9c9c9c" stroke-width="0.9"/><rect x="2.2" y="1.8" width="7" height="8.6" fill="#fff"/><rect x="2.6" y="2.4" width="2.6" height="0.8" fill="#e8a050"/><path d="M2.8 4.2 H4.3 L3 6 H4.4 L2.9 7.8" stroke="#666" stroke-width="0.6" fill="none"/><rect x="5.4" y="3.6" width="3.2" height="2" fill="#3f9fe0"/><rect x="5.4" y="3.6" width="1.5" height="0.9" fill="#f2c12e"/><rect x="5.4" y="6.8" width="3.2" height="2" fill="#3f9fe0"/><rect x="5.4" y="6.8" width="1.5" height="0.9" fill="#f2c12e"/></svg>
<svg class="a" style="left:920.8px;top:148.3px;" width="11.5" height="10.5" viewBox="0 0 11.5 10.5"><rect x="0.5" y="0.5" width="10.5" height="9.5" rx="2" fill="#e2e2e2" stroke="#bdbdbd" stroke-width="0.8"/><rect x="2.2" y="1.6" width="7" height="7.6" fill="#fff"/><rect x="2.8" y="2.2" width="3.5" height="0.8" fill="#e8a050"/><rect x="2.8" y="3.6" width="4.5" height="0.6" fill="#999"/><rect x="2.8" y="5.6" width="5.8" height="2.8" fill="#3f9fe0"/><rect x="2.8" y="5.6" width="2.6" height="1.3" fill="#f2c12e"/><rect x="6" y="7" width="2.6" height="1.4" fill="#4cb050"/></svg>
<svg class="a" style="left:920.8px;top:163.2px;" width="11.5" height="10.5" viewBox="0 0 11.5 10.5"><rect x="0.5" y="0.5" width="10.5" height="9.5" rx="2" fill="#e2e2e2" stroke="#bdbdbd" stroke-width="0.8"/><rect x="2.2" y="1.6" width="7" height="7.6" fill="#fff"/><rect x="2.8" y="2.2" width="3.5" height="0.8" fill="#e8a050"/><path d="M2.8 4.3 H8.4 M4.2 3.3 L2.9 4.3 L4.2 5.3" stroke="#111" stroke-width="0.7" fill="none"/><rect x="2.8" y="5.8" width="5.8" height="2.6" fill="#3f9fe0"/><rect x="2.8" y="5.8" width="2.6" height="1.2" fill="#f2c12e"/></svg>
<div class="a" style="left:919px;top:175px;width:14.7px;height:1px;background:#dddddd;"></div>
<div class="a t l" style="left:272.70250000000004px;top:131.31px;font-size:8.6px;line-height:8.6px;color:#7c7c7c;font-family:'Liberation Mono',monospace;transform:scaleX(0.9244);transform-origin:0 0;">33</div>
<div class="a t l" style="left:272.70250000000004px;top:142.41px;font-size:8.6px;line-height:8.6px;color:#7c7c7c;font-family:'Liberation Mono',monospace;transform:scaleX(0.9244);transform-origin:0 0;">34</div>
<div class="a t " style="left:323.40250000000003px;top:142.41px;font-size:8.6px;line-height:8.6px;color:#1a1a1a;font-family:'Liberation Mono',monospace;transform:scaleX(0.9244);transform-origin:0 0;"><span style="color:#2a8a2a">% Conditions for ode23</span></div>
<div class="a t l" style="left:272.70250000000004px;top:153.51px;font-size:8.6px;line-height:8.6px;color:#7c7c7c;font-family:'Liberation Mono',monospace;transform:scaleX(0.9244);transform-origin:0 0;">35</div>
<div class="a t " style="left:323.40250000000003px;top:153.51px;font-size:8.6px;line-height:8.6px;color:#1a1a1a;font-family:'Liberation Mono',monospace;transform:scaleX(0.9244);transform-origin:0 0;">F_0 = 0;</div>
<div class="a t l" style="left:272.70250000000004px;top:164.61px;font-size:8.6px;line-height:8.6px;color:#7c7c7c;font-family:'Liberation Mono',monospace;transform:scaleX(0.9244);transform-origin:0 0;">36</div>
<div class="a t " style="left:323.40250000000003px;top:164.61px;font-size:8.6px;line-height:8.6px;color:#1a1a1a;font-family:'Liberation Mono',monospace;transform:scaleX(0.9244);transform-origin:0 0;">a_0 = 0.05;</div>
<div class="a t l" style="left:272.70250000000004px;top:175.71px;font-size:8.6px;line-height:8.6px;color:#7c7c7c;font-family:'Liberation Mono',monospace;transform:scaleX(0.9244);transform-origin:0 0;">37</div>
<div class="a t " style="left:323.40250000000003px;top:175.71px;font-size:8.6px;line-height:8.6px;color:#1a1a1a;font-family:'Liberation Mono',monospace;transform:scaleX(0.9244);transform-origin:0 0;">SolverOptions = [];</div>
<div class="a t l" style="left:272.70250000000004px;top:186.81px;font-size:8.6px;line-height:8.6px;color:#7c7c7c;font-family:'Liberation Mono',monospace;transform:scaleX(0.9244);transform-origin:0 0;">38</div>
<div class="a t " style="left:323.40250000000003px;top:186.81px;font-size:8.6px;line-height:8.6px;color:#1a1a1a;font-family:'Liberation Mono',monospace;transform:scaleX(0.9244);transform-origin:0 0;">[~, dAF] = ode23(@calculateAF2, t, [a_0; F_0], SolverOptions, Vmt, V</div>
<div class="a t l" style="left:272.70250000000004px;top:197.91px;font-size:8.6px;line-height:8.6px;color:#7c7c7c;font-family:'Liberation Mono',monospace;transform:scaleX(0.9244);transform-origin:0 0;">39</div>
<div class="a t " style="left:323.40250000000003px;top:197.91px;font-size:8.6px;line-height:8.6px;color:#1a1a1a;font-family:'Liberation Mono',monospace;transform:scaleX(0.9244);transform-origin:0 0;">actstor(:,pairing)=dAF(:,1);</div>
<div class="a t l" style="left:272.70250000000004px;top:209.01px;font-size:8.6px;line-height:8.6px;color:#7c7c7c;font-family:'Liberation Mono',monospace;transform:scaleX(0.9244);transform-origin:0 0;">40</div>
<div class="a t " style="left:323.40250000000003px;top:209.01px;font-size:8.6px;line-height:8.6px;color:#1a1a1a;font-family:'Liberation Mono',monospace;transform:scaleX(0.9244);transform-origin:0 0;"><span style="color:#1a00ff">end</span></div>
<div class="a t l" style="left:272.70250000000004px;top:245.41px;font-size:8.6px;line-height:8.6px;color:#7c7c7c;font-family:'Liberation Mono',monospace;transform:scaleX(0.9244);transform-origin:0 0;">41</div>
<div class="a t " style="left:323.40250000000003px;top:245.41px;font-size:8.6px;line-height:8.6px;color:#1a1a1a;font-family:'Liberation Mono',monospace;transform:scaleX(0.9244);transform-origin:0 0;"><span style="color:#1a00ff">function</span> dAF = calculateAF2(t, AFm, Vmt, Vmax, F0, L0, Lmt, Lst, tau</div>
<div class="a t l" style="left:272.70250000000004px;top:256.51px;font-size:8.6px;line-height:8.6px;color:#7c7c7c;font-family:'Liberation Mono',monospace;transform:scaleX(0.9244);transform-origin:0 0;">42</div>
<div class="a t " style="left:323.40250000000003px;top:256.51px;font-size:8.6px;line-height:8.6px;color:#1a1a1a;font-family:'Liberation Mono',monospace;transform:scaleX(0.9244);transform-origin:0 0;"><span style="color:#2a8a2a">   % Activation &amp; Force Inputs</span></div>
<div class="a t l" style="left:272.70250000000004px;top:267.61px;font-size:8.6px;line-height:8.6px;color:#7c7c7c;font-family:'Liberation Mono',monospace;transform:scaleX(0.9244);transform-origin:0 0;">43</div>
<div class="a t " style="left:323.40250000000003px;top:267.61px;font-size:8.6px;line-height:8.6px;color:#1a1a1a;font-family:'Liberation Mono',monospace;transform:scaleX(0.9244);transform-origin:0 0;">   A = AFm(1);</div>
<div class="a t l" style="left:272.70250000000004px;top:278.71px;font-size:8.6px;line-height:8.6px;color:#7c7c7c;font-family:'Liberation Mono',monospace;transform:scaleX(0.9244);transform-origin:0 0;">44</div>
<div class="a t " style="left:323.40250000000003px;top:278.71px;font-size:8.6px;line-height:8.6px;color:#1a1a1a;font-family:'Liberation Mono',monospace;transform:scaleX(0.9244);transform-origin:0 0;">   F = AFm(2);</div>
<div class="a t l" style="left:272.70250000000004px;top:289.81px;font-size:8.6px;line-height:8.6px;color:#7c7c7c;font-family:'Liberation Mono',monospace;transform:scaleX(0.9244);transform-origin:0 0;">45</div>
<div class="a t l" style="left:272.70250000000004px;top:300.91px;font-size:8.6px;line-height:8.6px;color:#7c7c7c;font-family:'Liberation Mono',monospace;transform:scaleX(0.9244);transform-origin:0 0;">46</div>
<div class="a t " style="left:323.40250000000003px;top:300.91px;font-size:8.6px;line-height:8.6px;color:#1a1a1a;font-family:'Liberation Mono',monospace;transform:scaleX(0.9244);transform-origin:0 0;"><span style="color:#2a8a2a">   % Activation Dynamics</span></div>
<div class="a t l" style="left:272.70250000000004px;top:312.01px;font-size:8.6px;line-height:8.6px;color:#7c7c7c;font-family:'Liberation Mono',monospace;transform:scaleX(0.9244);transform-origin:0 0;">47</div>
<div class="a t " style="left:323.40250000000003px;top:312.01px;font-size:8.6px;line-height:8.6px;color:#1a1a1a;font-family:'Liberation Mono',monospace;transform:scaleX(0.9244);transform-origin:0 0;">   pulse = heaviside(t);</div>
<div class="a t l" style="left:272.70250000000004px;top:323.11px;font-size:8.6px;line-height:8.6px;color:#7c7c7c;font-family:'Liberation Mono',monospace;transform:scaleX(0.9244);transform-origin:0 0;">48</div>
<div class="a t " style="left:323.40250000000003px;top:323.11px;font-size:8.6px;line-height:8.6px;color:#1a1a1a;font-family:'Liberation Mono',monospace;transform:scaleX(0.9244);transform-origin:0 0;">   <span style="color:#1a00ff">if</span> A &lt; 0</div>
<div class="a t l" style="left:272.70250000000004px;top:334.21px;font-size:8.6px;line-height:8.6px;color:#7c7c7c;font-family:'Liberation Mono',monospace;transform:scaleX(0.9244);transform-origin:0 0;">49</div>
<div class="a t " style="left:323.40250000000003px;top:334.21px;font-size:8.6px;line-height:8.6px;color:#1a1a1a;font-family:'Liberation Mono',monospace;transform:scaleX(0.9244);transform-origin:0 0;">       A = 0;</div>
<div class="a t l" style="left:272.70250000000004px;top:345.31px;font-size:8.6px;line-height:8.6px;color:#7c7c7c;font-family:'Liberation Mono',monospace;transform:scaleX(0.9244);transform-origin:0 0;">50</div>
<div class="a t " style="left:323.40250000000003px;top:345.31px;font-size:8.6px;line-height:8.6px;color:#1a1a1a;font-family:'Liberation Mono',monospace;transform:scaleX(0.9244);transform-origin:0 0;">   <span style="color:#1a00ff">end</span></div>
<div class="a t l" style="left:272.70250000000004px;top:356.41px;font-size:8.6px;line-height:8.6px;color:#7c7c7c;font-family:'Liberation Mono',monospace;transform:scaleX(0.9244);transform-origin:0 0;">51</div>
<div class="a t l" style="left:272.70250000000004px;top:367.51px;font-size:8.6px;line-height:8.6px;color:#7c7c7c;font-family:'Liberation Mono',monospace;transform:scaleX(0.9244);transform-origin:0 0;">52</div>
<div class="a t " style="left:323.40250000000003px;top:367.51px;font-size:8.6px;line-height:8.6px;color:#1a1a1a;font-family:'Liberation Mono',monospace;transform:scaleX(0.9244);transform-origin:0 0;"><span style="color:#2a8a2a">   % Muscle Dynamics</span></div>
<div class="a t l" style="left:272.70250000000004px;top:378.61px;font-size:8.6px;line-height:8.6px;color:#7c7c7c;font-family:'Liberation Mono',monospace;transform:scaleX(0.9244);transform-origin:0 0;">53</div>
<div class="a t " style="left:323.40250000000003px;top:378.61px;font-size:8.6px;line-height:8.6px;color:#1a1a1a;font-family:'Liberation Mono',monospace;transform:scaleX(0.9244);transform-origin:0 0;">   Fm = F;</div>
<div class="a t l" style="left:272.70250000000004px;top:389.71px;font-size:8.6px;line-height:8.6px;color:#7c7c7c;font-family:'Liberation Mono',monospace;transform:scaleX(0.9244);transform-origin:0 0;">54</div>
<div class="a t " style="left:323.40250000000003px;top:389.71px;font-size:8.6px;line-height:8.6px;color:#1a1a1a;font-family:'Liberation Mono',monospace;transform:scaleX(0.9244);transform-origin:0 0;">   Vmt = Vmt ./ L0;</div>
<div class="a t l" style="left:272.70250000000004px;top:400.81px;font-size:8.6px;line-height:8.6px;color:#7c7c7c;font-family:'Liberation Mono',monospace;transform:scaleX(0.9244);transform-origin:0 0;">55</div>
<div class="a t " style="left:323.40250000000003px;top:400.81px;font-size:8.6px;line-height:8.6px;color:#1a1a1a;font-family:'Liberation Mono',monospace;transform:scaleX(0.9244);transform-origin:0 0;">   Vmax = Vmax ./ L0;</div>
<div class="a t l" style="left:272.70250000000004px;top:411.91px;font-size:8.6px;line-height:8.6px;color:#7c7c7c;font-family:'Liberation Mono',monospace;transform:scaleX(0.9244);transform-origin:0 0;">56</div>
<div class="a t l" style="left:272.70250000000004px;top:423.01px;font-size:8.6px;line-height:8.6px;color:#7c7c7c;font-family:'Liberation Mono',monospace;transform:scaleX(0.9244);transform-origin:0 0;">57</div>
<div class="a t " style="left:323.40250000000003px;top:423.01px;font-size:8.6px;line-height:8.6px;color:#1a1a1a;font-family:'Liberation Mono',monospace;transform:scaleX(0.9244);transform-origin:0 0;"><span style="color:#2a8a2a">   % LmNorm</span></div>
<div class="a t l" style="left:272.70250000000004px;top:434.11px;font-size:8.6px;line-height:8.6px;color:#7c7c7c;font-family:'Liberation Mono',monospace;transform:scaleX(0.9244);transform-origin:0 0;">58</div>
<div class="a" style="left:646.2px;top:129.5px;width:9.8px;height:305px;background:#f0f0f0;"></div>
<div class="a" style="left:647.3px;top:258.5px;width:7.7px;height:98px;background:#c2c2c2;"></div>
<svg class="a" style="left:648.6px;top:133.5px;" width="5" height="3" viewBox="0 0 5 3"><path d="M0 3 L2.5 0 L5 3Z" fill="#404040"/></svg>
<svg class="a" style="left:648.6px;top:427.5px;" width="5" height="3" viewBox="0 0 5 3"><path d="M0 0 H5 L2.5 3Z" fill="#404040"/></svg>
<div class="a" style="left:299px;top:434.4px;width:347.2px;height:9.6px;background:#f0f0f0;"></div>
<div class="a" style="left:309.3px;top:435.8px;width:172px;height:6.8px;background:#c2c2c2;"></div>
<svg class="a" style="left:302px;top:436.5px;" width="4" height="6" viewBox="0 0 4 6"><path d="M3.5 0 L0 3 L3.5 6Z" fill="#9a9a9a"/></svg>
<svg class="a" style="left:641px;top:436.5px;" width="4" height="6" viewBox="0 0 4 6"><path d="M0 0 L3.5 3 L0 6Z" fill="#404040"/></svg>
<div class="a" style="left:646.2px;top:434.4px;width:9.8px;height:9.6px;background:#dedede;"></div>
<div class="a" style="left:264px;top:449px;width:670.2px;height:103px;background:#ffffff;box-shadow:0 0 0 1px #dadada;"></div>
<div class="a" style="left:264px;top:449px;width:671px;height:11.5px;background:#f7f7f7;"></div>
<div class="a t l" style="left:266.9390862792315px;top:451.82px;font-size:8.72px;line-height:8.72px;color:#5a5a5a;transform:scaleX(0.8810);transform-origin:0 0;">Command Window</div>
<div class="a" style="left:264px;top:460.5px;width:671px;height:1px;background:#d0d0d0;"></div>
<div class="a" style="left:264px;top:461.5px;width:671px;height:15px;background:#fdfde0;"></div>
<div class="a" style="left:264px;top:476px;width:671px;height:1px;background:#cfcfcf;"></div>
<div class="a t " style="left:268.97134182302113px;top:465.42px;font-size:8.72px;line-height:8.72px;color:#1a1a1a;transform:scaleX(0.8193);transform-origin:0 0;">New to MATLAB? See resources for <span style="color:#0b3ee0;text-decoration:underline">Getting Started</span>.</div>
<svg class="a" style="left:922px;top:451px;" width="9" height="9" viewBox="0 0 9 9"><circle cx="4.5" cy="4.5" r="3.8" fill="#fff" stroke="#666" stroke-width="0.8"/><path d="M2.8 3.6 H6.2 L4.5 5.8Z" fill="#555"/></svg>
<svg class="a" style="left:926px;top:465px;" width="6" height="6" viewBox="0 0 6 6"><path d="M0.5 0.5 L5.5 5.5 M5.5 0.5 L0.5 5.5" stroke="#111" stroke-width="1.3"/></svg>
<div class="a" style="left:264px;top:477px;width:11.5px;height:75px;background:#efefef;"></div>
<div class="a t " style="left:266.4924px;top:480.34px;font-size:9.4px;line-height:9.4px;color:#333;transform:scaleX(0.9000);transform-origin:0 0;font-family:'Liberation Serif',serif;"><i>fx</i></div>
<div class="a t l" style="left:278.40969px;top:481.77px;font-size:9.37px;line-height:9.37px;color:#6a6a6a;transform:scaleX(1.0500);transform-origin:0 0;">&gt;&gt;</div>
<svg class="a" style="left:271.5px;top:489.5px;" width="3" height="2" viewBox="0 0 3 2"><path d="M0 0 H3 L1.5 1.8Z" fill="#222"/></svg>
<div class="a" style="left:935.2px;top:103px;width:2.8px;height:449px;background:#f6f6f6;"></div>
<div class="a" style="left:938.5px;top:104px;width:142px;height:448px;background:#ffffff;box-shadow:0 0 0 1px #c9c9c9;"></div>
<div class="a" style="left:938.5px;top:104px;width:142px;height:11.5px;background:#f7f7f7;"></div>
<div class="a" style="left:938.5px;top:115.5px;width:142px;height:1px;background:#c4c4c4;"></div>
<div class="a t l" style="left:941.3561388215685px;top:106.42px;font-size:8.72px;line-height:8.72px;color:#5a5a5a;transform:scaleX(0.8484);transform-origin:0 0;">Workspace</div>
<div class="a t " style="left:942.376333656644px;top:121.72px;font-size:8.72px;line-height:8.72px;color:#222;transform:scaleX(0.8098);transform-origin:0 0;">Name</div>
<svg class="a" style="left:965px;top:123.5px;" width="6" height="4" viewBox="0 0 6 4"><path d="M0 3.5 L3 0 L6 3.5Z" fill="#a9a9a9"/></svg>
<div class="a" style="left:1018px;top:117px;width:1px;height:15px;background:#ececec;"></div>
<div class="a" style="left:938.5px;top:132px;width:142px;height:1px;background:#f0f0f0;"></div>
<div class="a t " style="left:1022.3587906958525px;top:121.72px;font-size:8.72px;line-height:8.72px;color:#222;transform:scaleX(0.8433);transform-origin:0 0;">Value</div>
</body></html>
